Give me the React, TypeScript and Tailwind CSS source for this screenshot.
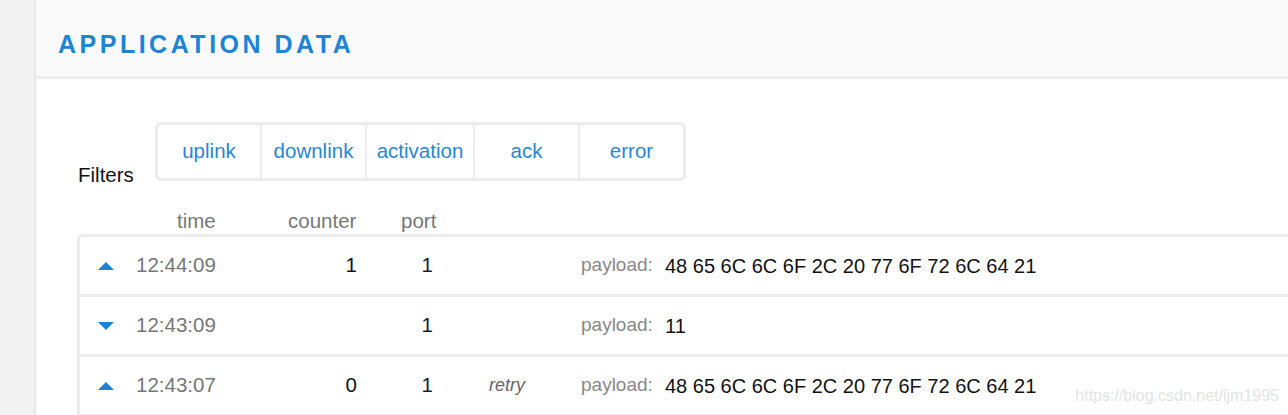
import React from "react";

type Row = {
  dir: "up" | "down";
  time: string;
  counter: string;
  port: string;
  note?: string;
  payload: string;
};

const rows: Row[] = [
  { dir: "up", time: "12:44:09", counter: "1", port: "1", payload: "48 65 6C 6C 6F 2C 20 77 6F 72 6C 64 21" },
  { dir: "down", time: "12:43:09", counter: "", port: "1", payload: "11" },
  { dir: "up", time: "12:43:07", counter: "0", port: "1", note: "retry", payload: "48 65 6C 6C 6F 2C 20 77 6F 72 6C 64 21" },
];

const filters = [
  { label: "uplink", w: "w-[102px]" },
  { label: "downlink", w: "w-[105px]" },
  { label: "activation", w: "w-[108px]" },
  { label: "ack", w: "w-[105px]" },
  { label: "error", w: "w-[105px]" },
];

function Arrow({ dir }: { dir: "up" | "down" }) {
  return (
    <svg width="16" height="8" viewBox="0 0 16 8" className="block">
      {dir === "up" ? (
        <polygon points="8,0 16,8 0,8" fill="#1b83d3" />
      ) : (
        <polygon points="0,0 16,0 8,8" fill="#1b83d3" />
      )}
    </svg>
  );
}

export default function App() {
  return (
    <div className="relative flex w-[1288px] h-[415px] overflow-hidden bg-white font-['Liberation_Sans',Arial,sans-serif]">
      {/* side strip */}
      <div className="w-[36px] shrink-0 bg-[#f2f2f2] border-r-2 border-[#e8e8e8]" />

      <div className="flex-1 flex flex-col min-w-0">
        {/* header */}
        <div className="h-[79px] shrink-0 bg-[#fafafa] border-b-[3px] border-[#ececec] pl-[22px] pt-[32px]">
          <h1 className="text-[25px] leading-none font-bold tracking-[3.5px] text-[#1a85d6]">
            APPLICATION DATA
          </h1>
        </div>

        <div className="pl-[41px] pt-[43px]">
          {/* filters */}
          <div className="flex h-[59px]">
            <div className="w-[78px] pl-px mt-[43px] text-[20.5px] leading-none text-[#111]">Filters</div>
            <div className="flex h-[59px] border-[3px] border-[#ececec] rounded-[6px]">
              {filters.map((f, i) => (
                <button
                  key={f.label}
                  className={`${f.w} flex items-center justify-center text-[20.5px] leading-none text-[#2a86d1] ${
                    i > 0 ? "border-l-2 border-[#ececec]" : ""
                  }`}
                >
                  {f.label}
                </button>
              ))}
            </div>
          </div>

          {/* column headers */}
          <div className="flex h-[51px] pt-[30px] text-[20.5px] leading-none text-[#777]">
            <span className="w-[100px]" />
            <span className="w-[111px]">time</span>
            <span className="w-[113px]">counter</span>
            <span>port</span>
          </div>

          {/* table */}
          <div className="mt-[2px] border-l-[3px] border-t-[3px] border-[#ececec] rounded-tl-[5px]">
            {rows.map((r, i) => (
              <div key={i} className="flex items-center h-[60px] border-b-[3px] border-[#ececec]">
                <span className="w-[56px] pl-[18px]">
                  <Arrow dir={r.dir} />
                </span>
                <span className="w-[120px] text-[20.5px] text-[#777]">{r.time}</span>
                <span className="w-[101px] text-right text-[20.5px] text-[#111]">{r.counter}</span>
                <span className="w-[76px] text-right text-[20.5px] text-[#1a1a3a]">{r.port}</span>
                <span className="w-[56px]" />
                <span className="w-[92px] text-[18px] italic text-[#666]">{r.note}</span>
                <span className="w-[84px] text-[19px] text-[#888]">payload:</span>
                <span className="text-[20px] text-[#111] whitespace-nowrap">{r.payload}</span>
              </div>
            ))}
          </div>
        </div>
      </div>

      <span className="absolute right-[9px] bottom-[11px] text-[16px] leading-none text-[#e3e3e3]">
        https://blog.csdn.net/ljm1995
      </span>
    </div>
  );
}
